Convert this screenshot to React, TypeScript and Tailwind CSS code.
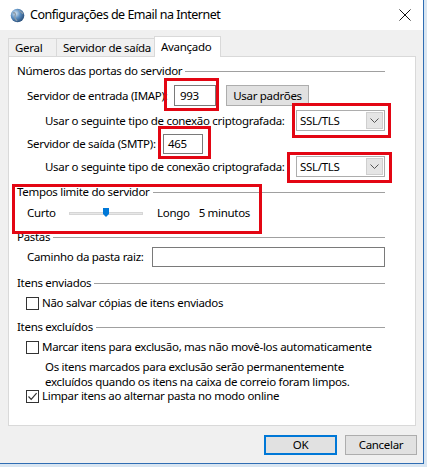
import React from "react";

function GroupHeader({ title, className }: { title: string; className: string }) {
  return (
    <div className={"flex h-[16px] items-center " + className}>
      <span className="whitespace-nowrap">{title}</span>
      <div className="ml-[3px] h-px flex-1 bg-[#a0a0a0]" />
    </div>
  );
}

function Checkbox({ checked }: { checked?: boolean }) {
  return (
    <span className="flex h-[13px] w-[13px] shrink-0 items-center justify-center border border-[#333333] bg-white">
      {checked && (
        <svg width="11" height="11" viewBox="0 0 11 11">
          <polyline points="1.5,5.5 4.2,8.3 9.6,2.2" fill="none" stroke="#333" strokeWidth="1.2" />
        </svg>
      )}
    </span>
  );
}

function Combo() {
  return (
    <div className="flex h-[21px] w-[89px] items-center justify-between border border-[#adadad] bg-white pl-[3px] pr-px">
      <span>SSL/TLS</span>
      <span className="flex h-[17px] w-[17px] items-center justify-center border border-[#cfcfcf] bg-[#e5e5e5]">
        <svg width="9" height="5" viewBox="0 0 9 5">
          <polyline points="0.5,0.5 4.5,4.5 8.5,0.5" fill="none" stroke="#555" strokeWidth="1" />
        </svg>
      </span>
    </div>
  );
}

function RedBox({ className }: { className: string }) {
  return <div className={"pointer-events-none absolute border-[3px] border-[#e30613] " + className} />;
}

export default function App() {
  return (
    <div className="relative h-[467px] w-[427px] overflow-hidden bg-[#d9e6f2] font-['Noto_Sans',sans-serif] text-[11.5px] tracking-[-0.3px] text-black">
      <div className="h-[464px] w-[424px] border-b border-r border-[#2f6db3] bg-[#f0f0f0]">
        {/* title bar */}
        <div className="flex h-[30px] items-center bg-white">
          <svg className="ml-[10px]" width="15" height="15" viewBox="0 0 15 15">
            <defs>
              <radialGradient id="g" cx="0.35" cy="0.35" r="0.7">
                <stop offset="0" stopColor="#dbe9f5" />
                <stop offset="0.5" stopColor="#5b8fc2" />
                <stop offset="1" stopColor="#2a4f7a" />
              </radialGradient>
            </defs>
            <circle cx="7.5" cy="7.5" r="6.8" fill="url(#g)" />
            <path d="M3 5 C5 4 6 6 5 8 C4 10 6 11 7 13" fill="none" stroke="#8a9aa8" strokeWidth="1.4" />
            <path d="M9 2 C10 4 12 4 13 6" fill="none" stroke="#8a9aa8" strokeWidth="1.2" />
          </svg>
          <span className="ml-[5px] text-[12.5px] leading-none tracking-[-0.5px]">
            Configurações de Email na Internet
          </span>
          <svg className="ml-auto mr-[12px]" width="12" height="12" viewBox="0 0 12 12">
            <path d="M0.5 0.5 L11.5 11.5 M11.5 0.5 L0.5 11.5" stroke="#111" strokeWidth="1" />
          </svg>
        </div>

        {/* tabs */}
        <div className="mt-[6px] flex h-[20px] items-end px-[8px]">
          <div className="flex h-[18px] w-[49px] items-center whitespace-nowrap border border-b-0 border-[#d9d9d9] pl-[6px]">
            Geral
          </div>
          <div className="-ml-px flex h-[18px] w-[99px] items-center whitespace-nowrap border border-b-0 border-[#d9d9d9] pl-[6px]">
            Servidor de saída
          </div>
          <div className="relative z-10 -mb-px -ml-px flex h-[21px] w-[67px] items-start whitespace-nowrap border border-b-0 border-[#d9d9d9] bg-white pl-[6px] pt-[1px]">
            Avançado
          </div>
        </div>

        {/* panel */}
        <div className="mx-[8px] h-[370px] w-[408px] border border-[#d9d9d9] bg-white pl-[8px] pr-[30px]">
          <GroupHeader title="Números das portas do servidor" className="mt-[6px]" />

          <div className="mt-[5px] flex h-[23px] items-center pl-[10px]">
            <span className="w-[147px] whitespace-nowrap">Servidor de entrada (IMAP):</span>
            <div className="flex h-[21px] w-[42px] items-center border border-[#7a7a7a] pl-[5px]">993</div>
            <div className="ml-[10px] flex h-[21px] w-[83px] items-center justify-center border border-[#adadad] bg-[#e1e1e1]">
              Usar padrões
            </div>
          </div>

          <div className="mt-[3px] flex h-[21px] items-center pl-[28px]">
            <span className="w-[251px] whitespace-nowrap">Usar o seguinte tipo de conexão criptografada:</span>
            <Combo />
          </div>

          <div className="mt-[3px] flex h-[20px] items-center pl-[10px]">
            <span className="w-[136px] whitespace-nowrap">Servidor de saída (SMTP):</span>
            <div className="flex h-[20px] w-[40px] items-center border border-[#7a7a7a] pl-[4px]">465</div>
          </div>

          <div className="mt-[2px] flex h-[21px] items-center pl-[28px]">
            <span className="w-[251px] whitespace-nowrap">Usar o seguinte tipo de conexão criptografada:</span>
            <Combo />
          </div>

          <GroupHeader title="Tempos limite do servidor" className="mt-[7px]" />

          <div className="mt-[5px] flex h-[16px] items-center pl-[10px]">
            <span className="w-[42px]">Curto</span>
            <div className="relative h-[3px] w-[74px] border border-[#d6d6d6] bg-[#e7e7e7]">
              <svg className="absolute left-[33px] top-[-5px]" width="6" height="9" viewBox="0 0 6 9">
                <path d="M0 0 H6 V6 L3 9 L0 6 Z" fill="#0078d7" />
              </svg>
            </div>
            <span className="ml-[14px]">Longo</span>
            <span className="ml-[9px]">5 minutos</span>
          </div>

          <GroupHeader title="Pastas" className="mt-[8px]" />

          <div className="mt-[2px] flex h-[20px] items-center pl-[10px]">
            <span className="w-[125px] whitespace-nowrap">Caminho da pasta raiz:</span>
            <div className="h-[20px] w-[234px] border border-[#7a7a7a]" />
          </div>

          <GroupHeader title="Itens enviados" className="mt-[8px]" />

          <div className="mt-[4px] flex h-[16px] items-center gap-[3px] pl-[9px]">
            <Checkbox />
            <span>Não salvar cópias de itens enviados</span>
          </div>

          <GroupHeader title="Itens excluídos" className="mt-[8px]" />

          <div className="mt-[4px] flex h-[16px] items-center gap-[3px] pl-[9px]">
            <Checkbox />
            <span className="whitespace-nowrap">Marcar itens para exclusão, mas não movê-los automaticamente</span>
          </div>

          <div className="mt-[4px] pl-[28px] leading-[15px]">
            <div className="whitespace-nowrap">Os itens marcados para exclusão serão permanentemente</div>
            <div className="whitespace-nowrap">excluídos quando os itens na caixa de correio foram limpos.</div>
          </div>

          <div className="flex h-[14px] items-center gap-[3px] pl-[9px]">
            <Checkbox checked />
            <span>Limpar itens ao alternar pasta no modo online</span>
          </div>
        </div>

        {/* buttons */}
        <div className="mt-[9px] flex justify-end gap-[8px] pr-[6px]">
          <div className="flex h-[20px] w-[73px] items-center justify-center border-2 border-[#0078d7] bg-[#e1e1e1]">OK</div>
          <div className="flex h-[20px] w-[72px] items-center justify-center border border-[#adadad] bg-[#e1e1e1]">
            Cancelar
          </div>
        </div>
      </div>

      {/* red annotation boxes */}
      <RedBox className="left-[164px] top-[78px] h-[33px] w-[55px]" />
      <RedBox className="left-[292px] top-[103px] h-[35px] w-[99px]" />
      <RedBox className="left-[158px] top-[126px] h-[33px] w-[53px]" />
      <RedBox className="left-[287px] top-[152px] h-[31px] w-[105px]" />
      <RedBox className="left-[12px] top-[184px] h-[50px] w-[250px]" />
    </div>
  );
}
